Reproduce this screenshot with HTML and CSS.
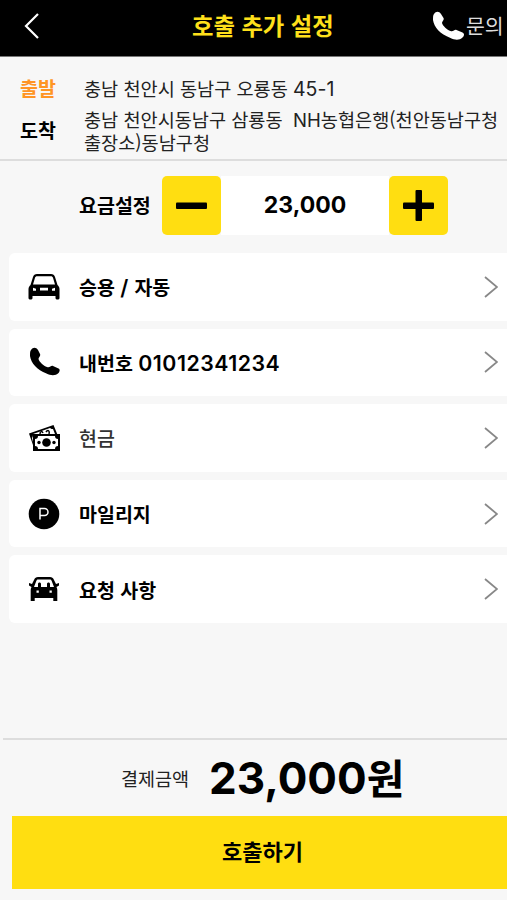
FILE: index.html
```html
<!DOCTYPE html>
<html lang="ko">
<head>
    <meta charset="UTF-8">
    <meta name="viewport" content="width=device-width, initial-scale=1.0">
    <title>호출 추가 설정</title>

    <link rel="stylesheet" href="styles.css">
</head>
<body>
    <header class="header">
        <button class="back">
            <svg width="16" height="28" viewBox="0 0 16 28"><path d="M14 2L2 14l12 12" fill="none" stroke="#fff" stroke-width="2.2"/></svg>
        </button>
        <h1 class="title">호출 추가 설정</h1>
        <a class="ask">
            <svg width="32" height="32" viewBox="0 0 32 32"><path d="M2 4C4 1 7 1 9 4l2.500 4c1 2-1.500 3-1.500 5 1 3 5 7 8.500 8 3 1 4-2 6-1l6 2.500c2 1 2 3 0 5-3 3-8 2.500-12 .5C8 24 2 17 1 10 1 7 1 5 2 4z" fill="#fff"/></svg>
            <span>문의</span>
        </a>
    </header>

    <section class="address">
        <div class="place">
            <strong class="start">출발</strong>
            <p>충남 천안시 동남구 오룡동 <span class="num dep">45-1</span></p>
        </div>
        <div class="place">
            <strong>도착</strong>
            <p>충남 천안시동남구 삼룡동&nbsp; <span class="num">NH</span>농협은행(천안동남구청<br>출장소)동남구청</p>
        </div>
    </section>

    <section class="fare">
        <span class="fareLabel">요금설정</span>
        <button class="fareBtn minus"><svg width="32" height="32" viewBox="0 0 32 32"><rect y="12.500" width="31" height="6.500" rx="1"/></svg></button>
        <span class="fareNum">23,000</span>
        <button class="fareBtn plus"><svg width="32" height="32" viewBox="0 0 32 32"><rect y="12.500" width="31" height="6.500" rx="1"/><rect x="12.500" width="6.500" height="31" rx="1"/></svg></button>
    </section>

    <ul class="list">
        <li class="item">
            <svg class="icon" viewBox="0 0 32 32"><path fill-rule="evenodd" d="M9 3h14c2 0 3.500 1 4 3l2.500 8c1 1 2 2 2 4v9c0 2-4 2-4 0v-2h-23v2c0 2-4 2-4 0v-9c0-2 1-3 2-4L5 6c.5-2 2-3 4-3zm0 2.300c-1 0-1.500.5-2 1.500l-2 6.700h22l-2-6.700c-.5-1-1-1.500-2-1.500zM5 16.700v3h3v-2zM27 16.700v3h-3v-2zM12 16.700v2.800h8v-2.800z"/></svg>
            <span>승용 <span class="num">/</span> 자동</span>
            <svg class="arrow" viewBox="0 0 14 22"><path d="M1 1l12 10L1 21"/></svg>
        </li>
        <li class="item">
            <svg class="icon" viewBox="0 0 32 32"><path d="M3 4C5 1 8 1 10 4l2 4c1 2-1.500 3-1.500 5 1 3 5 7 8.500 8 3 1 4-2 6-1l5.500 2.500c2 1 1 3 0 4.500-3 3-8 2.500-12 .5C9 24 3 17 2 10 2 7 2 5 3 4z"/></svg>
            <span>내번호 <span class="num">01012341234</span></span>
            <svg class="arrow" viewBox="0 0 14 22"><path d="M1 1l12 10L1 21"/></svg>
        </li>
        <li class="item cash">
            <svg class="icon" viewBox="0 0 32 32"><path d="M1 11.500L25.500 3 30 14 5 23z"/><path d="M5 12l17-6c1 1 2 1 3 1l2 5-22 8-1-4c1-1 1-3 1-4z" fill="#fff"/><path d="M12 12c0-3 2-3 3-1M18 10c2-3 4-1 3 2" fill="none" stroke="#000" stroke-width="1.500"/><rect x="5" y="12" width="27" height="17"/><path d="M10 14h17c0 2 1 3 3 3v7c-2 0-3 1-3 3H10c0-2-1-3-3-3v-7c2 0 3-1 3-3z" fill="#fff"/><circle cx="18.500" cy="20.500" r="4.300"/><circle cx="11" cy="20.500" r="1.700"/><circle cx="26" cy="20.500" r="1.700"/></svg>
            <span>현금</span>
            <svg class="arrow" viewBox="0 0 14 22"><path d="M1 1l12 10L1 21"/></svg>
        </li>
        <li class="item">
            <svg class="icon" viewBox="0 0 32 32"><circle cx="16" cy="16" r="15.300"/><path d="M12 21.500V10.500h4.500a3.500 3.500 0 0 1 0 7H12" fill="none" stroke="#fff" stroke-width="1.500"/></svg>
            <span>마일리지</span>
            <svg class="arrow" viewBox="0 0 14 22"><path d="M1 1l12 10L1 21"/></svg>
        </li>
        <li class="item">
            <svg class="icon" viewBox="0 0 32 32"><path fill-rule="evenodd" d="M10 4h12c2 0 3 1 3.500 2l2.500 5 3-1v2.500L28.500 14c.5 1 .8 2 .8 3v11h-4v-3H6.700v3h-4V17c0-1 .3-2 .8-3L1 12.500V10l3 1 2.500-5C7 5 8 4 10 4zm0 2.500c-1 0-1 .5-1.500 1L6 14h4v-3c0-2 3-2 3 0v3h6v-3c0-2 3-2 3 0v3h4l-2.500-6.500c-.5-.5-.5-1-1.500-1zM8.500 17.500v2.300h2.300v-2.300zM21.500 17.500v2.300h2.300v-2.300z"/></svg>
            <span>요청 사항</span>
            <svg class="arrow" viewBox="0 0 14 22"><path d="M1 1l12 10L1 21"/></svg>
        </li>
    </ul>

    <footer class="footer">
        <div class="total">
            <span>결제금액</span>
            <strong>23,000<em>원</em></strong>
        </div>
        <button class="call">호출하기</button>
    </footer>
</body>
</html>
```
FILE: styles.css
```css
* {
    box-sizing: border-box;
    margin: 0;
    padding: 0;
}
body {
    display: flex;
    flex-direction: column;
    height: 900px;
    overflow: hidden;
    background: #f7f7f7;
    color: #000;
    font-family: "Noto Sans CJK KR", sans-serif;
    font-size: 19.5px;
}
button {
    border: 0;
    background: none;
    font: inherit;
    color: inherit;
}
svg { display: block; }
.num {
    font-family: Inter, sans-serif;
    line-height: 1;
}

/* 상단 */
.header {
    display: grid;
    grid-template-columns: 192px 1fr 75px;
    align-items: center;
    height: 57px;
    padding-bottom: 5px;
    background: #000;
    border-bottom: 1px solid #777;
}
.back { padding-left: 24px; }
.title {
    padding-bottom: 1px;
    font-size: 23.3px;
    font-weight: 700;
    line-height: 30px;
    color: #ffe01b;
    white-space: nowrap;
}
.ask {
    display: flex;
    align-items: center;
    gap: 2px;
    color: #ddd;
    font-size: 20.5px;
    line-height: 28px;
    white-space: nowrap;
}
.ask svg { flex: none; }
.ask span { padding-bottom: 2px; }

/* 출발 / 도착 */
.address {
    height: 104px;
    padding: 19px 0 0 20px;
    border-bottom: 2px solid #ddd;
    font-size: 18.6px;
    line-height: 23px;
}
.place {
    display: flex;
    align-items: center;
    margin-bottom: 7px;
    white-space: nowrap;
}
.place strong {
    width: 64px;
    padding-bottom: 1px;
    font-size: 19.5px;
}
.place .start { color: #ff9524; }
.place p { color: #222; }
.dep { font-size: 19.5px; }

/* 요금 */
.fare {
    display: flex;
    align-items: center;
    height: 59px;
    margin: 15px 0 18px 79px;
    font-weight: 700;
}
.fareLabel {
    width: 83px;
    padding-bottom: 2px;
}
.fareBtn {
    display: flex;
    align-items: center;
    justify-content: center;
    width: 59px;
    height: 59px;
    border-radius: 5px;
    background: #ffde11;
}
.fareNum {
    width: 168px;
    height: 59px;
    background: #fff;
    text-align: center;
    font: 700 23px/59px Inter, sans-serif;
}

.list {
    display: flex;
    flex-direction: column;
    gap: 8px;
    padding-left: 9px;
    list-style: none;
}
.item {
    display: flex;
    align-items: center;
    height: 67.6px;
    padding: 0 9px 0 19px;
    border-radius: 6px 0 0 6px;
    background: #fff;
    font-weight: 700;
}
.item .num {
    font-size: 21.3px;
    font-weight: 600;
    letter-spacing: 0.5px;
}
.cash { font-weight: 500; color: #333; }
.icon {
    width: 32px;
    height: 32px;
    margin-right: 19px;
    fill: #000;
}
.arrow {
    width: 14px;
    height: 22px;
    margin-left: auto;
    fill: none;
    stroke: #888;
    stroke-width: 1.8;
}

/* 하단 결제금액 */
.footer {
    height: 162px;
    margin: auto 0 0 3px;
    border-top: 2px solid #ddd;
}
.total {
    display: flex;
    align-items: center;
    gap: 20px;
    height: 76px;
    padding-left: 118px;
    font-size: 18.5px;
    color: #222;
}
.total strong {
    color: #000;
    font: 700 44px/76px Inter, sans-serif;
}
.total em {
    font: 700 41px/60px "Noto Sans CJK KR", sans-serif;
}
.call {
    width: calc(100% - 9px);
    height: 73px;
    margin-left: 9px;
    padding: 0 0 5px 6px;
    background: #ffde11;
    font-size: 22px;
    font-weight: 700;
}
```
